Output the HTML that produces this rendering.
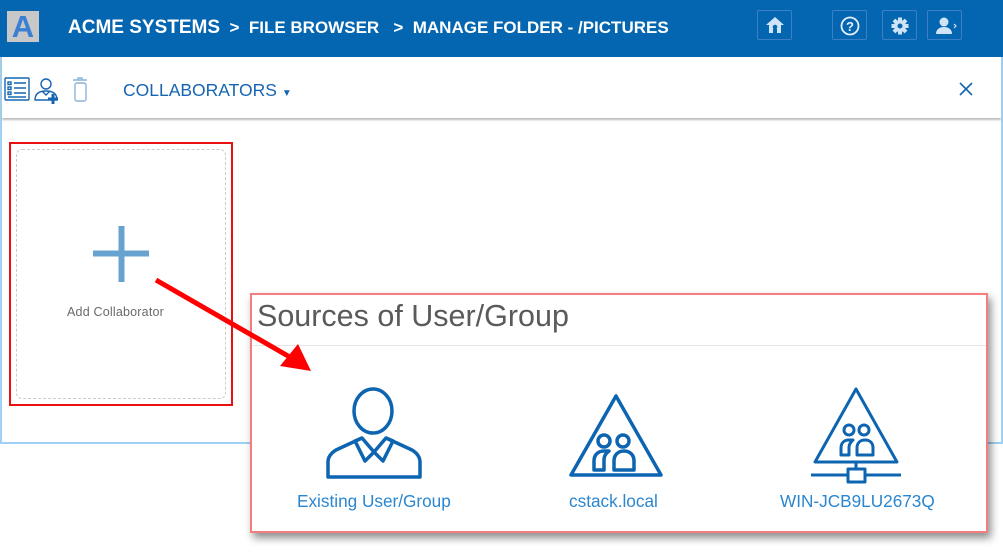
<!DOCTYPE html>
<html><head><meta charset="utf-8"><style>
*{margin:0;padding:0;box-sizing:border-box}
body{width:1003px;height:558px;background:#fff;position:relative;overflow:hidden;font-family:"Liberation Sans",sans-serif}
.frame{position:absolute;left:0;top:0;width:1003px;height:444px;border:2px solid #9fd0f5;border-top:none}
.hdr{position:absolute;left:0;top:0;width:1003px;height:57px;background:#0465b1}
.logo{position:absolute;left:7px;top:11px;width:32px;height:31px;background:#c8c8c8;color:#3b7fd4;font-weight:bold;font-size:31px;line-height:32px;text-align:center}
.crumb{position:absolute;left:68px;top:17px;color:#fff;font-weight:bold;font-size:17px;white-space:nowrap}
.crumb .big{font-size:19px}
.hb{position:absolute;top:10px;width:35px;height:30px;border:1px solid #3b80c4;border-radius:2px}
.hb svg{position:absolute;left:7px;top:5px}
.tb{position:absolute;left:2px;top:57px;width:999px;height:61px;background:#fff;box-shadow:0 2px 2px #bbb}
.coll{position:absolute;left:123px;top:80px;color:#1565b0;font-size:17.5px}
.card{position:absolute;left:9px;top:142px;width:224px;height:264px;border:2px solid #e81010}
.card .in{position:absolute;left:5px;top:5px;right:5px;bottom:5px;border:1px dashed #ccc;border-radius:6px}
.dlg{position:absolute;left:250px;top:293px;width:738px;height:240px;background:#fff;border:2px solid #f47d7d;box-shadow:3px 5px 8px rgba(0,0,0,.45)}
.dlg h1{position:absolute;left:5px;top:4px;font-size:30.5px;font-weight:normal;color:#5a5a5a;white-space:nowrap}
.dlg .sep{position:absolute;left:0;right:0;top:50px;border-top:1px solid #e6e6e6}
.lbl{position:absolute;color:#2a86d0;font-size:17.2px;white-space:nowrap}
</style></head><body>
<div class="frame"></div>
<div class="hdr">
 <div class="logo">A</div>
 <div class="crumb"><span class="big">ACME SYSTEMS</span>&nbsp; &gt; &nbsp;FILE BROWSER &nbsp; &gt; &nbsp;MANAGE FOLDER - /PICTURES</div>
 <div class="hb" style="left:757px"><svg width="20" height="18" viewBox="0 0 20 18"><path d="M10 1L1 9h3v8h12V9h3z" fill="#d0e4f7"/><circle cx="10" cy="11" r="2.3" fill="#0465b1"/><path d="M8 17v-4h4v4z" fill="#0465b1"/></svg></div>
 <div class="hb" style="left:832px"><svg width="20" height="20" viewBox="0 0 20 20"><circle cx="10" cy="10" r="8.5" fill="none" stroke="#e6f0fa" stroke-width="1.8"/><text x="10" y="15" font-size="13" font-weight="bold" fill="#e6f0fa" text-anchor="middle" font-family="Liberation Sans">?</text></svg></div>
 <div class="hb" style="left:882px"><svg width="20" height="20" viewBox="0 0 20 20"><g fill="#d0e4f7"><circle cx="10" cy="10" r="6"/><rect x="8" y="1.5" width="4" height="17"/><rect x="1.5" y="8" width="17" height="4"/><rect x="8" y="1.5" width="4" height="17" transform="rotate(45 10 10)"/><rect x="8" y="1.5" width="4" height="17" transform="rotate(-45 10 10)"/></g><circle cx="10" cy="10" r="2.5" fill="#0465b1"/></svg></div>
 <div class="hb" style="left:927px"><svg width="24" height="20" viewBox="0 0 24 20"><circle cx="9" cy="6" r="4.5" fill="#d0e4f7"/><path d="M1 18c0-5 4-7 8-7s8 2 8 7z" fill="#d0e4f7"/><path d="M19 8l2 2-2 2" stroke="#d0e4f7" fill="none" stroke-width="1.2"/></svg></div>
</div>
<div class="tb"></div>
<svg style="position:absolute;left:4px;top:77px" width="90" height="30" viewBox="0 0 90 30">
 <g stroke="#1565b0" fill="none" stroke-width="1.4">
  <rect x="1" y="1" width="24" height="22" rx="1"/>
  <rect x="4" y="5" width="3" height="2.5"/><rect x="4" y="10" width="3" height="2.5"/><rect x="4" y="15" width="3" height="2.5"/>
  <path d="M10 6h12M10 11h12M10 16h12M4 20h18"/>
  <circle cx="42" cy="7" r="5"/><path d="M31 23c0-6 4-9 11-9s11 3 11 9z"/><path d="M38 14l4 4 4-4"/>
 </g>
 <path d="M44 22h10M49 17v10" stroke="#1565b0" stroke-width="3"/>
 <g stroke="#8bb3db" fill="none" stroke-width="1.4"><path d="M69 3h14M74 3v-2h4v2"/><rect x="71" y="6" width="11" height="18" rx="2"/></g>
</svg>
<div class="coll">COLLABORATORS <span style="font-size:10px">▼</span></div>
<svg style="position:absolute;left:959px;top:82px" width="14" height="14"><path d="M1 1L13 13M13 1L1 13" stroke="#1565b0" stroke-width="1.6"/></svg>
<div class="card"><div class="in"></div></div>
<svg style="position:absolute;left:93px;top:226px" width="58" height="58"><path d="M0 27.5h56M28.5 0v56" stroke="#68a3d0" stroke-width="6"/></svg>
<div style="position:absolute;left:67px;top:305px;color:#6a6a6a;font-size:12.5px;letter-spacing:.2px">Add Collaborator</div>
<div class="dlg">
 <h1>Sources of User/Group</h1>
 <div class="sep"></div>
</div>
<svg style="position:absolute;left:0;top:0" width="1003" height="558">
 <path d="M156 280L295 360" stroke="#ff0000" stroke-width="5"/>
 <path d="M311 371L280 366L298 344z" fill="#ff0000"/>
 <g stroke="#0d64b0" fill="none" stroke-width="3.5" stroke-linejoin="round">
  <ellipse cx="373" cy="411" rx="19" ry="22"/>
  <path d="M362 438L336 450Q328 455 328 462V477H420V462Q420 455 412 450L386 438"/>
  <path d="M362 438L355 441L365 461L374 452L383 461L393 441L386 438L374 452Z"/>
  <path d="M616 396l-45 79h90z"/>
  <circle cx="604" cy="441" r="6"/><circle cx="623" cy="441" r="6"/>
  <path d="M604 451c-6 0-10 4-10 10v9h10v-10c0-4 2-7 5-9zM614 470v-9c0-6 4-10 10-10s10 4 10 10v9z"/>
  <path d="M856 389l-41 73h82z" stroke-width="3"/>
  <circle cx="849" cy="430" r="5" stroke-width="3"/><circle cx="864" cy="430" r="5" stroke-width="3"/>
  <path d="M849 440c-5 0-8 3-8 8v7h8v-8c0-3 2-5 4-7zM857 455v-7c0-5 3-8 8-8s8 3 8 8v7z" stroke-width="3"/>
  <path d="M811 475h36M865 475h36M856 462v7" stroke-width="3"/>
  <rect x="848" y="469" width="17" height="13" stroke-width="3"/>
 </g>
</svg>
<div class="lbl" style="left:297px;top:491px">Existing User/Group</div>
<div class="lbl" style="left:569px;top:491px">cstack.local</div>
<div class="lbl" style="left:780px;top:491px">WIN-JCB9LU2673Q</div>
</body></html>
